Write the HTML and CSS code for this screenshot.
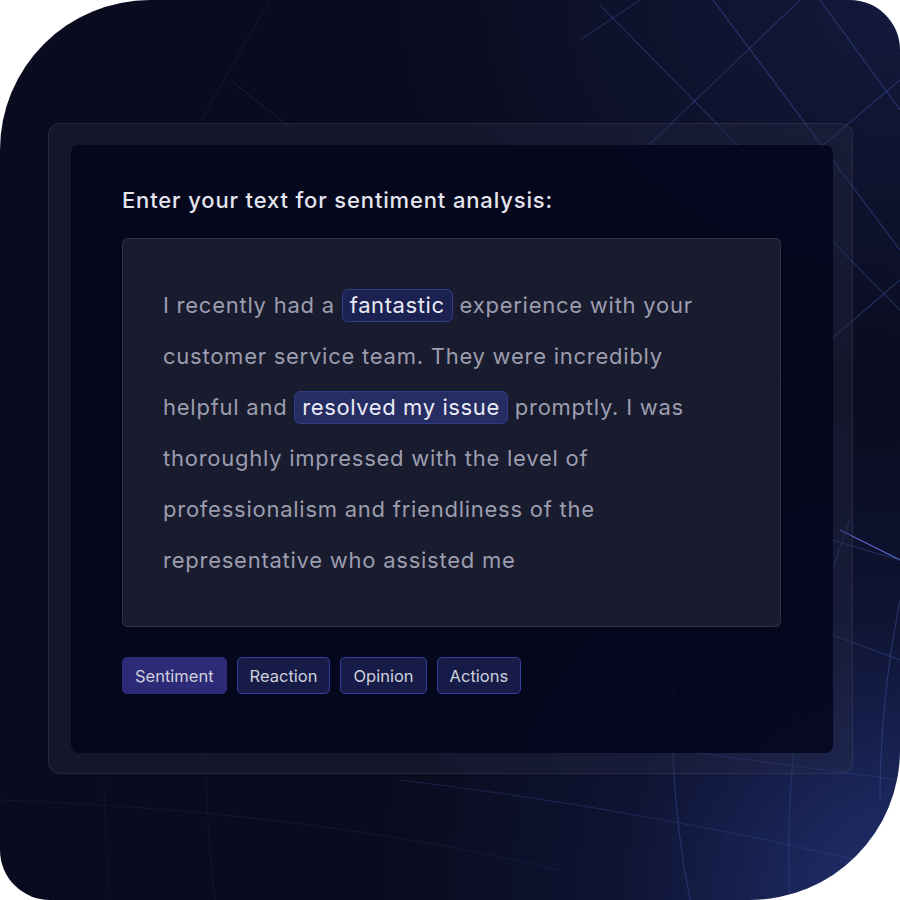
FILE: index.html
```html
<!DOCTYPE html>
<html>
<head>
<meta charset="utf-8">
<link rel="stylesheet" href="styles.css">
</head>
<body>
<div class="card">
  <svg class="grid" width="900" height="900" viewBox="0 0 900 900">
    <g fill="none" stroke="#3a4f9a" stroke-width="1.2">
      <line x1="600" y1="5" x2="900" y2="310" stroke-opacity="0.45"/>
      <line x1="713" y1="0" x2="900" y2="250" stroke-opacity="0.55"/>
      <line x1="820" y1="0" x2="900" y2="110" stroke-opacity="0.55"/>
      <line x1="800" y1="0" x2="560" y2="230" stroke-opacity="0.45"/>
      <line x1="900" y1="80" x2="640" y2="300" stroke-opacity="0.5"/>
      <line x1="640" y1="0" x2="580" y2="40" stroke-opacity="0.4"/>
      <line x1="900" y1="280" x2="760" y2="400" stroke-opacity="0.5"/>
      <line x1="230" y1="80" x2="300" y2="135" stroke-opacity="0.2"/>
      <line x1="270" y1="0" x2="190" y2="140" stroke-opacity="0.15"/>
      <path d="M900 560 Q 870 545 840 530" stroke-opacity="0.9" stroke="#6070d8"/>
      <path d="M580 460 Q 760 520 900 560" stroke-opacity="0.45"/>
      <path d="M560 540 Q 740 600 900 660" stroke-opacity="0.45"/>
      <path d="M300 700 Q 600 740 900 780" stroke-opacity="0.35"/>
      <path d="M400 780 Q 650 810 900 870" stroke-opacity="0.3"/>
      <path d="M0 800 Q 300 810 560 870" stroke-opacity="0.15"/>
      <path d="M700 470 Q 650 700 690 900" stroke-opacity="0.45"/>
      <path d="M850 520 Q 780 700 790 900" stroke-opacity="0.4"/>
      <path d="M900 600 Q 880 700 880 800" stroke-opacity="0.5"/>
      <path d="M210 640 Q 200 780 215 900" stroke-opacity="0.12"/>
      <path d="M105 640 Q 100 780 110 900" stroke-opacity="0.1"/>
    </g>
  </svg>
  <div class="outer">
    <div class="inner">
      <h1 class="title">Enter your text for sentiment analysis:</h1>
      <div class="textbox">
        <p class="text">I recently had a <span class="hl">fantastic</span> experience with your<br>customer service team. They were incredibly<br>helpful and <span class="hl hl-strong">resolved my issue</span> promptly. I was<br>thoroughly impressed with the level of<br>professionalism and friendliness of the<br>representative who assisted me</p>
      </div>
      <div class="tabs">
        <button class="tab active">Sentiment</button>
        <button class="tab">Reaction</button>
        <button class="tab">Opinion</button>
        <button class="tab">Actions</button>
      </div>
    </div>
  </div>
</div>
</body>
</html>
```

FILE: styles.css
```css
* { box-sizing: border-box; }
html, body {
  margin: 0;
  padding: 0;
  background: #ffffff;
}
body {
  font-family: Inter, "Noto Sans", sans-serif;
}
.card {
  position: relative;
  width: 900px;
  height: 900px;
  border-radius: 150px 50px 150px 50px;
  overflow: hidden;
  background:
    radial-gradient(ellipse 520px 520px at 900px 900px, rgba(40, 62, 140, 0.75), rgba(30, 45, 110, 0.25) 55%, rgba(10, 11, 30, 0) 100%),
    radial-gradient(ellipse 500px 400px at 900px 0px, rgba(25, 35, 80, 0.6), rgba(10, 11, 30, 0) 100%),
    #0a0b1e;
  padding-top: 123px;
  padding-left: 48px;
}
.grid {
  position: absolute;
  left: 0;
  top: 0;
}
.outer {
  position: relative;
  width: 805px;
  height: 651px;
  padding: 21px 21px 0 22px;
  border-radius: 12px;
  background: rgba(40, 42, 70, 0.35);
  border: 1px solid rgba(255, 255, 255, 0.07);
}
.inner {
  width: 762px;
  height: 608px;
  border-radius: 8px;
  background: rgba(3, 4, 26, 0.82);
  padding: 40px 52px 0 51px;
}
.title {
  margin: 0;
  font-size: 22px;
  line-height: 30px;
  font-weight: 500;
  color: #e4e5ee;
  letter-spacing: 0.85px;
}
.textbox {
  margin-top: 23px;
  width: 659px;
  height: 389px;
  border-radius: 6px;
  background: rgba(30, 32, 52, 0.8);
  border: 1px solid rgba(255, 255, 255, 0.11);
  padding: 41px 20px 0 40px;
}
.text {
  margin: 0;
  font-size: 22px;
  line-height: 51px;
  color: #9c9dae;
  letter-spacing: 0.75px;
  white-space: nowrap;
}
.hl {
  display: inline-block;
  line-height: 31px;
  padding: 0 7px;
  border-radius: 6px;
  background: #1b2150;
  border: 1px solid #303d86;
  color: #eaeaf4;
  letter-spacing: 0.6px;
}
.hl-strong {
  background: #262d62;
}
.tabs {
  display: flex;
  gap: 10px;
  margin-top: 30px;
}
.tab {
  height: 37px;
  padding: 0 12px;
  border-radius: 5px;
  font-family: Inter, "Noto Sans", sans-serif;
  font-size: 16.5px;
  color: #cfd0de;
  background: #161c47;
  border: 1px solid #343fa0;
}
.tab.active {
  background: #2d2b78;
  border-color: #2d2b78;
}
```
